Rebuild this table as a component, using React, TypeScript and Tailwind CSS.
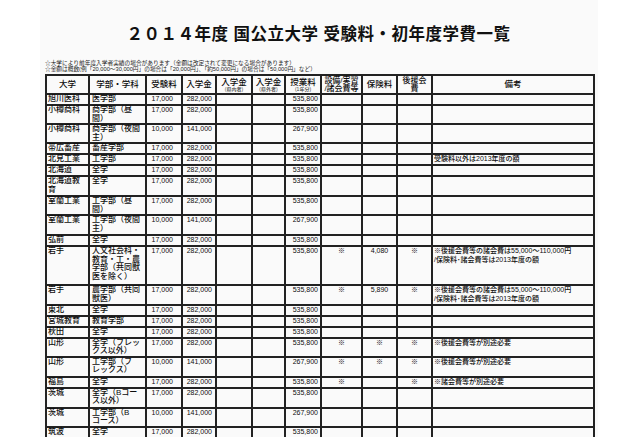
import React from 'react';

type Row = {
  h: string;
  univ: string[];
  dept: string[];
  exam: string;
  entry: string;
  tuition: string;
  facility?: string;
  insurance?: string;
  support?: string;
  note?: string[];
};

const NOTE_IWATE = ['※後援会費等の諸会費は55,000～110,000円', '/保険料･諸会費等は2013年度の額'];

const ROWS: Row[] = [
  { h: 'h-[11px]', univ: ['旭川医科'], dept: ['医学部'], exam: '17,000', entry: '282,000', tuition: '535,800' },
  { h: 'h-[19px]', univ: ['小樽商科'], dept: ['商学部（昼', '間）'], exam: '17,000', entry: '282,000', tuition: '535,800' },
  { h: 'h-[19px]', univ: ['小樽商科'], dept: ['商学部（夜間', '主）'], exam: '10,000', entry: '141,000', tuition: '267,900' },
  { h: 'h-[11px]', univ: ['帯広畜産'], dept: ['畜産学部'], exam: '17,000', entry: '282,000', tuition: '535,800' },
  { h: 'h-[11px]', univ: ['北見工業'], dept: ['工学部'], exam: '17,000', entry: '282,000', tuition: '535,800', note: ['受験料以外は2013年度の額'] },
  { h: 'h-[11px]', univ: ['北海道'], dept: ['全学'], exam: '17,000', entry: '282,000', tuition: '535,800' },
  { h: 'h-[20px]', univ: ['北海道教', '育'], dept: ['全学'], exam: '17,000', entry: '282,000', tuition: '535,800' },
  { h: 'h-[19px]', univ: ['室蘭工業'], dept: ['工学部（昼', '間）'], exam: '17,000', entry: '282,000', tuition: '535,800' },
  { h: 'h-[20px]', univ: ['室蘭工業'], dept: ['工学部（夜間', '主）'], exam: '10,000', entry: '141,000', tuition: '267,900' },
  { h: 'h-[11px]', univ: ['弘前'], dept: ['全学'], exam: '17,000', entry: '282,000', tuition: '535,800' },
  {
    h: 'h-[39px]', univ: ['岩手'], dept: ['人文社会科・', '教育・工・農', '学部（共同獣', '医を除く）'],
    exam: '17,000', entry: '282,000', tuition: '535,800', facility: '※', insurance: '4,080', support: '※', note: NOTE_IWATE,
  },
  {
    h: 'h-[20px]', univ: ['岩手'], dept: ['農学部（共同', '獣医）'],
    exam: '17,000', entry: '282,000', tuition: '535,800', facility: '※', insurance: '5,890', support: '※', note: NOTE_IWATE,
  },
  { h: 'h-[11px]', univ: ['東北'], dept: ['全学'], exam: '17,000', entry: '282,000', tuition: '535,800' },
  { h: 'h-[10px]', univ: ['宮城教育'], dept: ['教育学部'], exam: '17,000', entry: '282,000', tuition: '535,800' },
  { h: 'h-[11px]', univ: ['秋田'], dept: ['全学'], exam: '17,000', entry: '282,000', tuition: '535,800' },
  {
    h: 'h-[19px]', univ: ['山形'], dept: ['全学（フレッ', 'クス以外）'],
    exam: '17,000', entry: '282,000', tuition: '535,800', facility: '※', insurance: '※', support: '※', note: ['※後援会費等が別途必要'],
  },
  {
    h: 'h-[20px]', univ: ['山形'], dept: ['工学部（フ', 'レックス）'],
    exam: '10,000', entry: '141,000', tuition: '267,900', facility: '※', insurance: '※', support: '※', note: ['※後援会費等が別途必要'],
  },
  { h: 'h-[11px]', univ: ['福島'], dept: ['全学'], exam: '17,000', entry: '282,000', tuition: '535,800', facility: '※', support: '※', note: ['※諸会費等が別途必要'] },
  { h: 'h-[20px]', univ: ['茨城'], dept: ['全学（Bコー', 'ス以外）'], exam: '17,000', entry: '282,000', tuition: '535,800' },
  { h: 'h-[19px]', univ: ['茨城'], dept: ['工学部（B', 'コース）'], exam: '10,000', entry: '141,000', tuition: '267,900' },
  { h: 'h-[11px]', univ: ['筑波'], dept: ['全学'], exam: '17,000', entry: '282,000', tuition: '535,800' },
];

const Lines = ({ lines }: { lines?: string[] }) => (
  <>
    {(lines || []).map((l, i) => (
      <div key={i} className="whitespace-nowrap">{l}</div>
    ))}
  </>
);

const cell = 'border-2 border-[#222] align-top p-0 leading-[8.5px]';

const HeadCell = ({ main, sub, lines }: { main?: string; sub?: string; lines?: string[] }) => (
  <th className="border-2 border-[#222] p-0 text-center align-middle font-medium">
    {lines ? (
      <div className="text-[8px] leading-[8px]">
        {lines.map((l) => <div key={l} className="whitespace-nowrap">{l}</div>)}
      </div>
    ) : (
      <div>
        <div className="text-[8.5px] leading-[9px]">{main}</div>
        {sub && <div className="text-[5px] leading-[5px] text-[#444]">{sub}</div>}
      </div>
    )}
  </th>
);

const App = () => {
  return (
    <div
      className="w-[640px] h-[437px] overflow-hidden bg-white text-[#0d0d0d]"
      style={{ fontFamily: '"Liberation Sans", "Noto Sans CJK JP", sans-serif' }}
    >
      <div className="ml-[40px] w-[558px] h-[437px] bg-[#fafafa] pt-[24px]">
        <h1 className="text-center text-[16.5px] font-bold leading-[20px] tracking-[0.5px] text-[#111] pr-[1px]">
          ２０１４年度 国公立大学 受験料・初年度学費一覧
        </h1>

        <div className="mt-[16px] ml-[5px] text-[5.7px] leading-[6px] text-[#222]">
          <div className="whitespace-nowrap">☆大学により前年度入学者実績の場合があります（金額は改定されて変更になる場合があります）</div>
          <div className="whitespace-nowrap">☆金額は概数(例「20,000～30,000円」の場合は「20,000円」、「約50,000円」の場合は「50,000円」など）</div>
        </div>

        <table className="mt-[2px] ml-[5px] w-[548px] table-fixed border-collapse text-[8px] font-medium">
          <colgroup>
            <col className="w-[43px]" />
            <col className="w-[57px]" />
            <col className="w-[36px]" />
            <col className="w-[34px]" />
            <col className="w-[36px]" />
            <col className="w-[33px]" />
            <col className="w-[36px]" />
            <col className="w-[41px]" />
            <col className="w-[35px]" />
            <col className="w-[35px]" />
            <col className="w-[162px]" />
          </colgroup>
          <thead>
            <tr className="h-[19px]">
              <HeadCell main="大学" />
              <HeadCell main="学部・学科" />
              <HeadCell main="受験料" />
              <HeadCell main="入学金" />
              <HeadCell main="入学金" sub="(県内者)" />
              <HeadCell main="入学金" sub="(県外者)" />
              <HeadCell main="授業料" sub="(1年分)" />
              <HeadCell lines={['設備/実習', '/諸会費等']} />
              <HeadCell main="保険料" />
              <HeadCell lines={['後援会', '費']} />
              <HeadCell main="備考" />
            </tr>
          </thead>
          <tbody>
            {ROWS.map((r, i) => (
              <tr key={i} className={r.h}>
                <td className={`${cell} pl-[1px]`}><Lines lines={r.univ} /></td>
                <td className={`${cell} pl-[2px]`}><Lines lines={r.dept} /></td>
                <td className={`${cell} text-right pr-[8px] text-[7px]`}>{r.exam}</td>
                <td className={`${cell} text-right pr-[3px] text-[7px]`}>{r.entry}</td>
                <td className={cell} />
                <td className={cell} />
                <td className={`${cell} text-right pr-[2px] text-[7px]`}>{r.tuition}</td>
                <td className={`${cell} text-center text-[7px]`}>{r.facility}</td>
                <td className={`${cell} text-center text-[7px]`}>{r.insurance}</td>
                <td className={`${cell} text-center text-[7px]`}>{r.support}</td>
                <td className={`${cell} pl-[1px] text-[7px]`}><Lines lines={r.note} /></td>
              </tr>
            ))}
          </tbody>
        </table>
      </div>
    </div>
  );
};

export default App;
